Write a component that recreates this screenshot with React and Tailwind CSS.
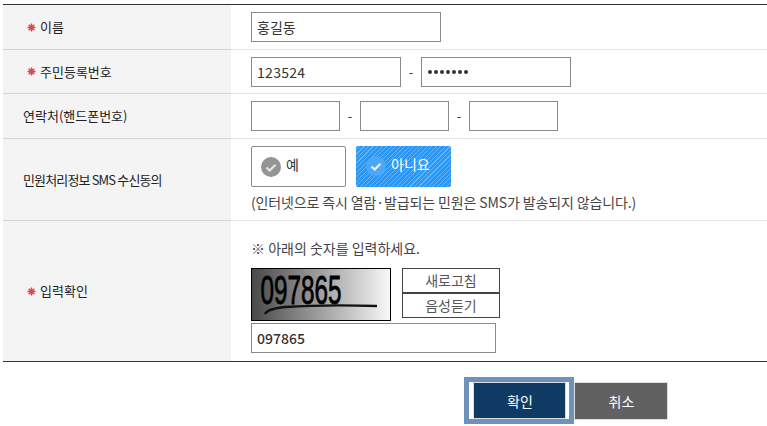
const font = { fontFamily: '"Noto Sans CJK KR", "Noto Sans", sans-serif' };

function Star() {
  return (
    <svg width="9" height="9" viewBox="0 0 9 9" className="mr-[4px] shrink-0">
      <path d="M4.5 0.5v8M0.5 4.5h8M1.7 1.7l5.6 5.6M7.3 1.7L1.7 7.3" stroke="#e8404a" strokeWidth="1.5" />
    </svg>
  );
}

function Row({ label, star, h, pl, children, last, labelClass = "" }) {
  return (
    <div className={`flex ${h} border-b ${last ? "border-[#333]" : "border-[#e6e6e6]"}`}>
      <div className={`flex w-[228px] shrink-0 items-center bg-[#f4f4f4] text-[13px] text-[#222] -mb-px border-b ${last ? "border-[#333]" : "border-[#d4d4d4]"} ${pl}`}>
        {star && <Star />}
        <span className={labelClass}>{label}</span>
      </div>
      <div className="flex-1 pl-5">{children}</div>
    </div>
  );
}

function Field({ w, value }) {
  return (
    <div className={`${w} flex h-[30px] items-center border border-[#8a8a8a] bg-white pl-[5px] text-[14px] text-[#333]`}>
      {value}
    </div>
  );
}

function Check({ active }) {
  return (
    <svg width="20" height="20" viewBox="0 0 20 20" className="shrink-0">
      <circle cx="10" cy="10" r="10" fill={active ? "#4aa8fb" : "#949494"} />
      <path d="M5.5 10.5l3.2 3L14.5 7.7" fill="none" stroke={active ? "#e8f4ff" : "#e6e6e6"} strokeWidth="2.2" />
    </svg>
  );
}

function Dots() {
  return (
    <span className="flex gap-[2px] pl-px">
      {[0, 1, 2, 3, 4, 5, 6].map((i) => (
        <span key={i} className="size-[4px] rounded-full bg-[#333]" />
      ))}
    </span>
  );
}

export default function App() {
  return (
    <div style={font} className="h-[426px] w-[767px] overflow-hidden bg-white pl-[3px] pt-1 text-[#333]">
      <div className="border-t border-[#333]">
        <Row label="이름" star h="h-[45px]" pl="pl-[24px]">
          <div className="pt-[7px]"><Field w="w-[190px]" value="홍길동" /></div>
        </Row>
        <Row label="주민등록번호" star h="h-[44px]" pl="pl-[24px]">
          <div className="flex items-center pt-[7px]">
            <Field w="w-[150px]" value={<span className="tracking-[0.3px]">123524</span>} />
            <span className="w-5 text-center text-[13px]">-</span>
            <Field w="w-[150px]" value={<Dots />} />
          </div>
        </Row>
        <Row label="연락처(핸드폰번호)" h="h-[45px]" pl="pl-[20px]">
          <div className="flex items-center pt-[7px]">
            <Field w="w-[89px]" value="" />
            <span className="w-5 text-center text-[13px]">-</span>
            <Field w="w-[89px]" value="" />
            <span className="w-5 text-center text-[13px]">-</span>
            <Field w="w-[89px]" value="" />
          </div>
        </Row>
        <Row label="민원처리정보 SMS 수신동의" h="h-[82px]" pl="pl-[20px]" labelClass="tracking-[-0.85px]">
          <div className="flex gap-[10px] pt-[7px]">
            <div className="flex h-[41px] w-[95px] items-start gap-[5px] rounded-[2px] border border-[#8a8a8a] pl-[9px] pt-[9px] text-[14px] leading-[20px]">
              <span className="mt-[1px]"><Check /></span>
              <span className="-mt-[2px]">예</span>
            </div>
            <div className="flex h-[41px] w-[95px] items-start gap-[5px] rounded-[2px] bg-[#2a97f5] bg-[repeating-linear-gradient(135deg,#2a97f5_0px,#2a97f5_2.4px,#66b5f8_2.4px,#66b5f8_3.2px)] pl-[10px] pt-[10px] text-[14px] leading-[20px] text-white">
              <span><Check active /></span>
              <span className="-mt-[2px]">아니요</span>
            </div>
          </div>
          <p className="mt-[5px] text-[14px] leading-[20px] tracking-[-0.13px] text-[#444]">(인터넷으로 즉시 열람·발급되는 민원은 SMS가 발송되지 않습니다.)</p>
        </Row>
        <Row label="입력확인" star h="h-[141px]" pl="pl-[24px]" last>
          <p className="pt-[17px] text-[14px] leading-[20px] text-[#444]">※ 아래의 숫자를 입력하세요.</p>
          <div className="mt-[10px] flex items-start gap-[11px]">
            <svg width="140" height="53" viewBox="0 0 140 53" className="shrink-0 overflow-visible">
              <defs>
                <linearGradient id="g" x1="0" x2="1" y1="0" y2="0">
                  <stop offset="0" stopColor="#484848" />
                  <stop offset="1" stopColor="#f8f8f8" />
                </linearGradient>
              </defs>
              <rect x="0.5" y="0.5" width="139" height="52" fill="url(#g)" stroke="#000" />
              <text x="9.5" y="36" fontFamily="Liberation Sans, sans-serif" fontSize="40" fill="#000" stroke="#000" strokeWidth="0.8" textLength="81" lengthAdjust="spacingAndGlyphs">097865</text>
              <path d="M14 46c2-4 10-6 20-7 30-2 62-2 92-1" fill="none" stroke="#111" strokeWidth="2.4" />
            </svg>
            <div className="flex w-[98px] flex-col text-center text-[14px] text-[#555]">
              <div className="h-[25px] border border-[#444] leading-[23px]">새로고침</div>
              <div className="h-[25px] border border-[#444] leading-[23px]">음성듣기</div>
            </div>
          </div>
          <div className="mt-[2px]"><Field w="w-[245px]" value={<span className="font-medium">097865</span>} /></div>
        </Row>
      </div>
      <div className="flex pl-[466px] pt-[20px] text-[14px] text-white">
        <div className="h-[37px] w-[100px] pl-[4px] pr-[3px] outline-5 outline-[#6f92bd]">
          <div className="flex h-[37px] items-center justify-center border border-[#dddddd] bg-[#0f3a63] pt-px pl-px">확인</div>
        </div>
        <div className="ml-[5px] flex h-[38px] w-[94px] items-center justify-center border border-[#dddddd] bg-[#616161] pt-px pl-px">취소</div>
      </div>
    </div>
  );
}
